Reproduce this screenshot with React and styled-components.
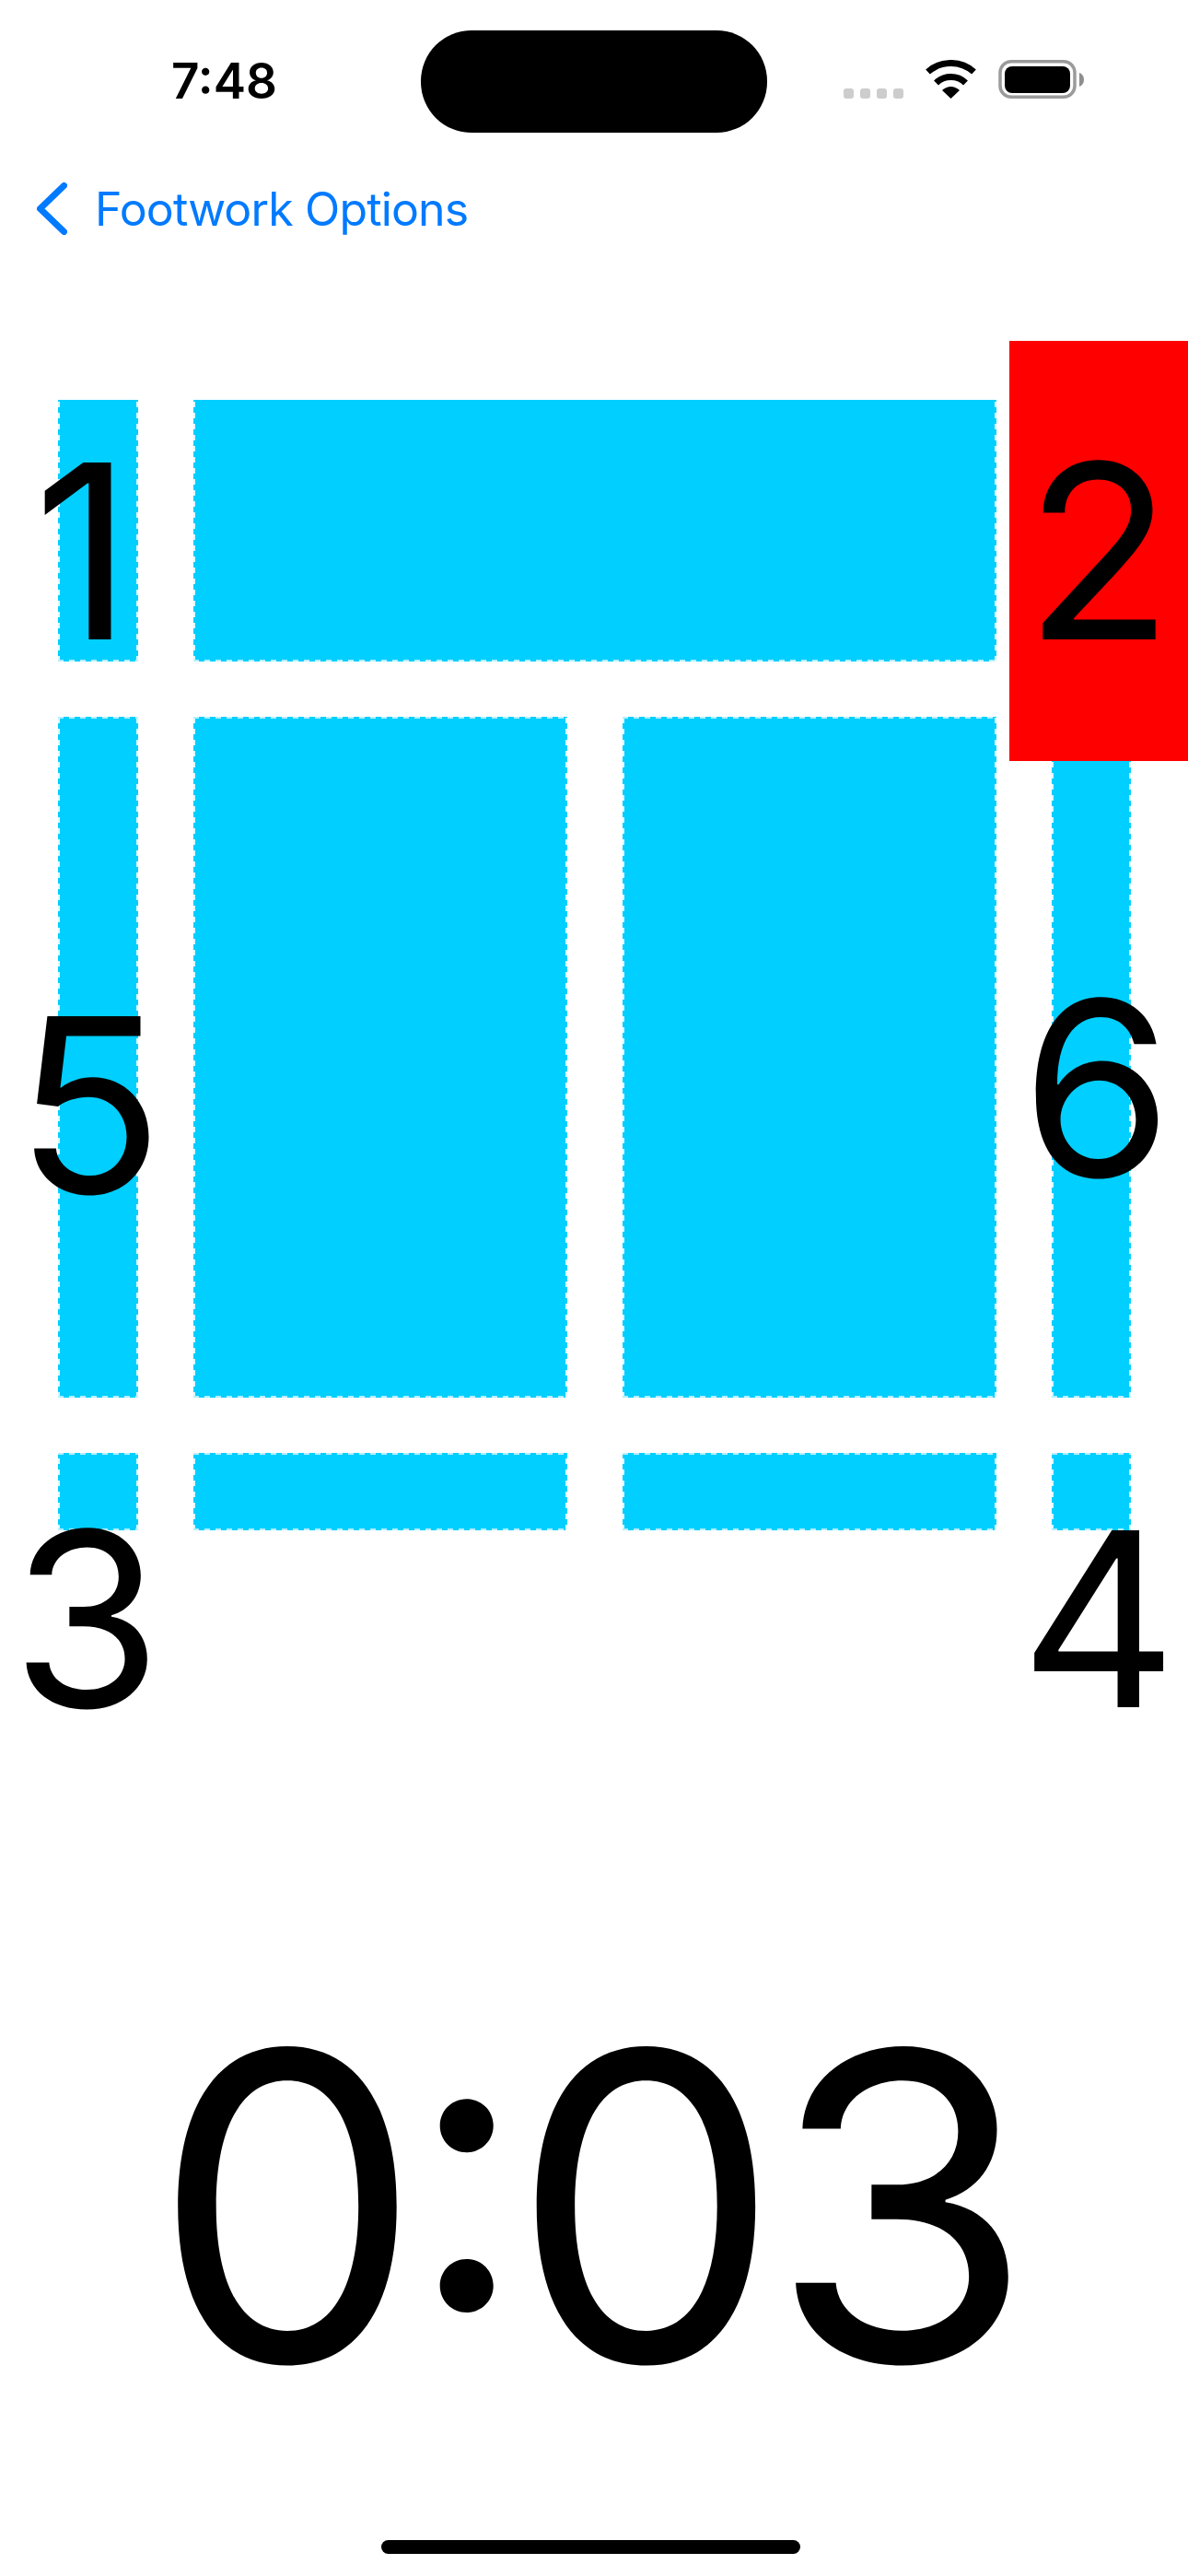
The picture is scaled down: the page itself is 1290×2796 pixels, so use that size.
import React from "react";
import styled, { createGlobalStyle } from "styled-components";

const Global = createGlobalStyle`
  html, body { margin: 0; padding: 0; background: #fff; }
  #root { width: 1290px; height: 2796px; }
`;

const Page = styled.div`
  position: relative;
  width: 1290px;
  height: 2796px;
  overflow: hidden;
  background: #fff;
  color: #000;
  font-family: Inter, "Liberation Sans", sans-serif;
  display: flex;
  flex-direction: column;
`;

const StatusBar = styled.header`
  height: 144px;
  padding-top: 33px;
  box-sizing: border-box;
  display: flex;
  align-items: flex-start;
`;

const Time = styled.div`
  width: 271px;
  margin-left: 186px;
  height: 111px;
  display: flex;
  align-items: center;
  font-size: 53px;
  font-weight: 600;
  line-height: 1;
`;

const Island = styled.div`
  width: 376px;
  height: 111px;
  border-radius: 55px;
  background: #000;
`;

const Indicators = styled.div`
  margin: 32px 0 0 83px;
  display: flex;
  align-items: flex-end;
  height: 42px;
`;

const Dots = styled.div`
  display: flex;
  gap: 7px;
  margin-right: 23px;
`;

const Dot = styled.span`
  width: 11px;
  height: 11px;
  border-radius: 3px;
  background: #cdcdcd;
`;

const Wifi = styled.svg`
  width: 57px;
  height: 42px;
  margin-right: 23px;
`;

const Battery = styled.svg`
  width: 93px;
  height: 42px;
`;

const Nav = styled.nav`
  height: 57px;
  margin-top: 54px;
  padding-left: 40px;
  display: flex;
  align-items: center;
  gap: 30px;
`;

const Chevron = styled.svg`
  width: 33px;
  height: 57px;
`;

const BackLabel = styled.span`
  font-size: 50px;
  font-weight: 400;
  line-height: 1;
  color: #007aff;
  letter-spacing: -0.85px;
`;

const Court = styled.section`
  margin: 179px 0 0 63px;
  display: grid;
  grid-template-columns: 87px 406px 406px 86px;
  grid-template-rows: 284px 739px 84px;
  column-gap: 60px;
  row-gap: 60px;
`;

const Cell = styled.div`
  grid-column: ${(p) => p.$span || "auto"};
  background-color: #00cfff;
  background-image:
    repeating-linear-gradient(90deg, #b4efff 0 6px, transparent 6px 12px),
    repeating-linear-gradient(90deg, #b4efff 0 6px, transparent 6px 12px),
    repeating-linear-gradient(0deg, #dcf8ff 0 6px, transparent 6px 12px),
    repeating-linear-gradient(0deg, #dcf8ff 0 6px, transparent 6px 12px);
  background-size: 100% ${(p) => (p.$flushTop ? "0" : "2px")}, 100% 2px, 2px 100%, 2px 100%;
  background-position: top left, bottom left, top left, top right;
  background-repeat: no-repeat;
`;

const Marker = styled.div`
  position: absolute;
  left: ${(p) => (p.$side === "left" ? "0" : "1096px")};
  top: ${(p) => p.$top}px;
  width: 194px;
  height: 456px;
  box-sizing: border-box;
  padding-right: ${(p) => p.$inset || 0}px;
  display: flex;
  align-items: center;
  justify-content: center;
  background: ${(p) => (p.$active ? "#ff0000" : "transparent")};
  font-size: 264px;
  line-height: 1;
`;

const Timer = styled.div`
  height: 620px;
  margin-top: 423px;
  padding-right: 14px;
  display: flex;
  align-items: center;
  justify-content: center;
  font-size: 464px;
  line-height: 1;
  font-weight: 400;
  letter-spacing: -12px;
  white-space: nowrap;
`;

const TimerColon = styled.span`
  font-size: 440px;
  font-feature-settings: "case";
  vertical-align: 9px;
  margin: 0 -3px;
`;

const HomeIndicator = styled.div`
  position: absolute;
  left: 414px;
  top: 2757px;
  width: 455px;
  height: 15px;
  border-radius: 8px;
  background: #000;
`;

const markers = [
  { n: "1", side: "left", top: 370, inset: 14 },
  { n: "2", side: "right", top: 370, active: true },
  { n: "5", side: "left", top: 971 },
  { n: "6", side: "right", top: 953, inset: 4 },
  { n: "3", side: "left", top: 1529, inset: 6 },
  { n: "4", side: "right", top: 1529 },
];

export default function App() {
  return (
    <Page>
      <Global />
      <StatusBar>
        <Time>7:48</Time>
        <Island />
        <Indicators>
          <Dots>
            <Dot />
            <Dot />
            <Dot />
            <Dot />
          </Dots>
          <Wifi viewBox="0 0 57 42">
            <path d="M3.5 13 A37.6 37.6 0 0 1 53.5 13" fill="none" stroke="#000" strokeWidth="7" />
            <path d="M12.5 25 A23 23 0 0 1 44.5 25" fill="none" stroke="#000" strokeWidth="7" />
            <path d="M28.5 42 L19 33 Q28.5 25 38 33 Z" fill="#000" />
          </Wifi>
          <Battery viewBox="0 0 93 42">
            <rect x="2" y="1.75" width="81" height="38.5" rx="12" fill="none" stroke="#9b9b9b" strokeWidth="3.5" />
            <rect x="7" y="7" width="71" height="29" rx="8" fill="#000" />
            <path d="M88 14 C91 15 93 18 93 21.5 C93 25 91 28 88 29 Z" fill="#8e8e8e" />
          </Battery>
        </Indicators>
      </StatusBar>
      <Nav>
        <Chevron viewBox="0 0 33 57">
          <path d="M29.5 3.5 L3.5 28.5 L29.5 53.5" fill="none" stroke="#007aff" strokeWidth="7" strokeLinecap="round" strokeLinejoin="round" />
        </Chevron>
        <BackLabel>Footwork Options</BackLabel>
      </Nav>
      <Court>
        <Cell $flushTop />
        <Cell $flushTop $span="span 2" />
        <Cell $flushTop />
        <Cell />
        <Cell />
        <Cell />
        <Cell />
        <Cell />
        <Cell />
        <Cell />
        <Cell />
      </Court>
      {markers.map((m) => (
        <Marker key={m.n} $side={m.side} $top={m.top} $active={m.active} $inset={m.inset}>
          {m.n}
        </Marker>
      ))}
      <Timer>
        <span>
          0<TimerColon>:</TimerColon>03
        </span>
      </Timer>
      <HomeIndicator />
    </Page>
  );
}
